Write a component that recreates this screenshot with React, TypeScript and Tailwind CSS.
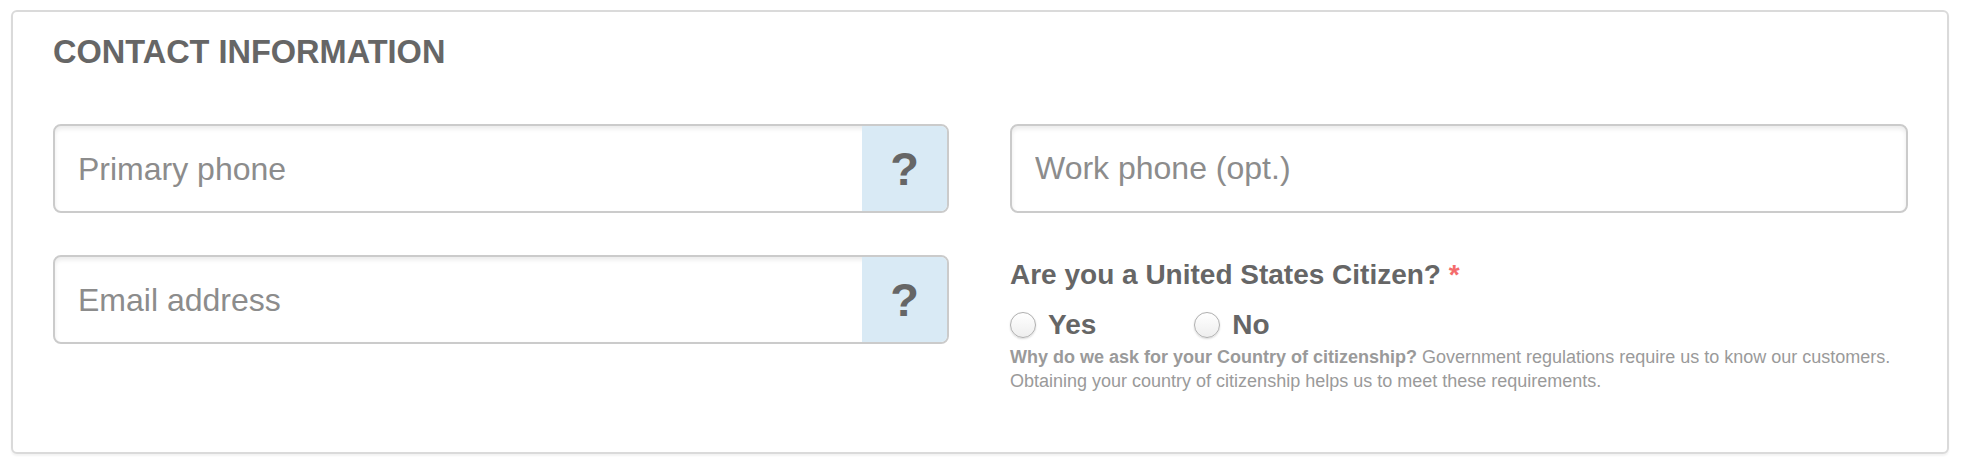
import React from 'react'

const HelpField = ({ placeholder }: { placeholder: string }) => {
  return (
    <div className="flex h-[89px] rounded-lg border-2 border-[#cbcbcb] bg-white shadow-[inset_0_3px_4px_rgba(0,0,0,0.08)] overflow-hidden">
      <input
        type="text"
        placeholder={placeholder}
        className="flex-1 min-w-0 bg-transparent pl-[23px] text-[32px] text-[#555] placeholder:text-[#8c8c8c] focus:outline-none"
      />
      <div className="w-[85px] flex items-center justify-center bg-[#d9eaf5] text-[47px] font-bold leading-none text-[#666]">
        ?
      </div>
    </div>
  )
}

const Radio = ({ label }: { label: string }) => {
  return (
    <label className="flex items-center gap-[12px] cursor-pointer">
      <span className="w-[26px] h-[26px] rounded-full border border-[#afafaf] bg-gradient-to-b from-white to-[#eeeeee] shadow-[0_1px_2px_rgba(0,0,0,0.15)]" />
      <span className="text-[28px] font-bold leading-[32px] text-[#666]">{label}</span>
    </label>
  )
}

const App = () => {
  return (
    <div className="min-h-screen bg-white pl-[11px] pt-[10px] font-['Liberation_Sans',Arial,sans-serif]">
      <div className="w-[1938px] rounded-md border-2 border-[#dadada] bg-white px-[40px] pt-[22px] pb-[59px] shadow-[0_2px_2px_rgba(0,0,0,0.05)]">
        <h2 className="text-[32.5px] font-bold leading-[36px] text-[#666]">CONTACT INFORMATION</h2>
        <div className="mt-[54px] grid grid-cols-[896px_898px] gap-x-[61px]">
          <div className="flex flex-col gap-[42px]">
            <HelpField placeholder="Primary phone" />
            <HelpField placeholder="Email address" />
          </div>
          <div className="flex flex-col">
            <input
              type="text"
              placeholder="Work phone (opt.)"
              className="h-[89px] rounded-lg border-2 border-[#cbcbcb] bg-white pl-[23px] text-[32px] text-[#555] placeholder:text-[#8c8c8c] shadow-[inset_0_3px_4px_rgba(0,0,0,0.08)] focus:outline-none"
            />
            <p className="mt-[46px] text-[28px] font-bold leading-[32px] text-[#666]">
              Are you a United States Citizen? <span className="text-[#f46c6c]">*</span>
            </p>
            <div className="mt-[18px] flex items-center gap-[98px]">
              <Radio label="Yes" />
              <Radio label="No" />
            </div>
            <p className="mt-[4px] text-[18px] leading-[24px] text-[#9a9a9a]">
              <span className="font-bold">Why do we ask for your Country of citizenship?</span> Government regulations
              require us to know our customers.
              <br />
              Obtaining your country of citizenship helps us to meet these requirements.
            </p>
          </div>
        </div>
      </div>
    </div>
  )
}

export default App
